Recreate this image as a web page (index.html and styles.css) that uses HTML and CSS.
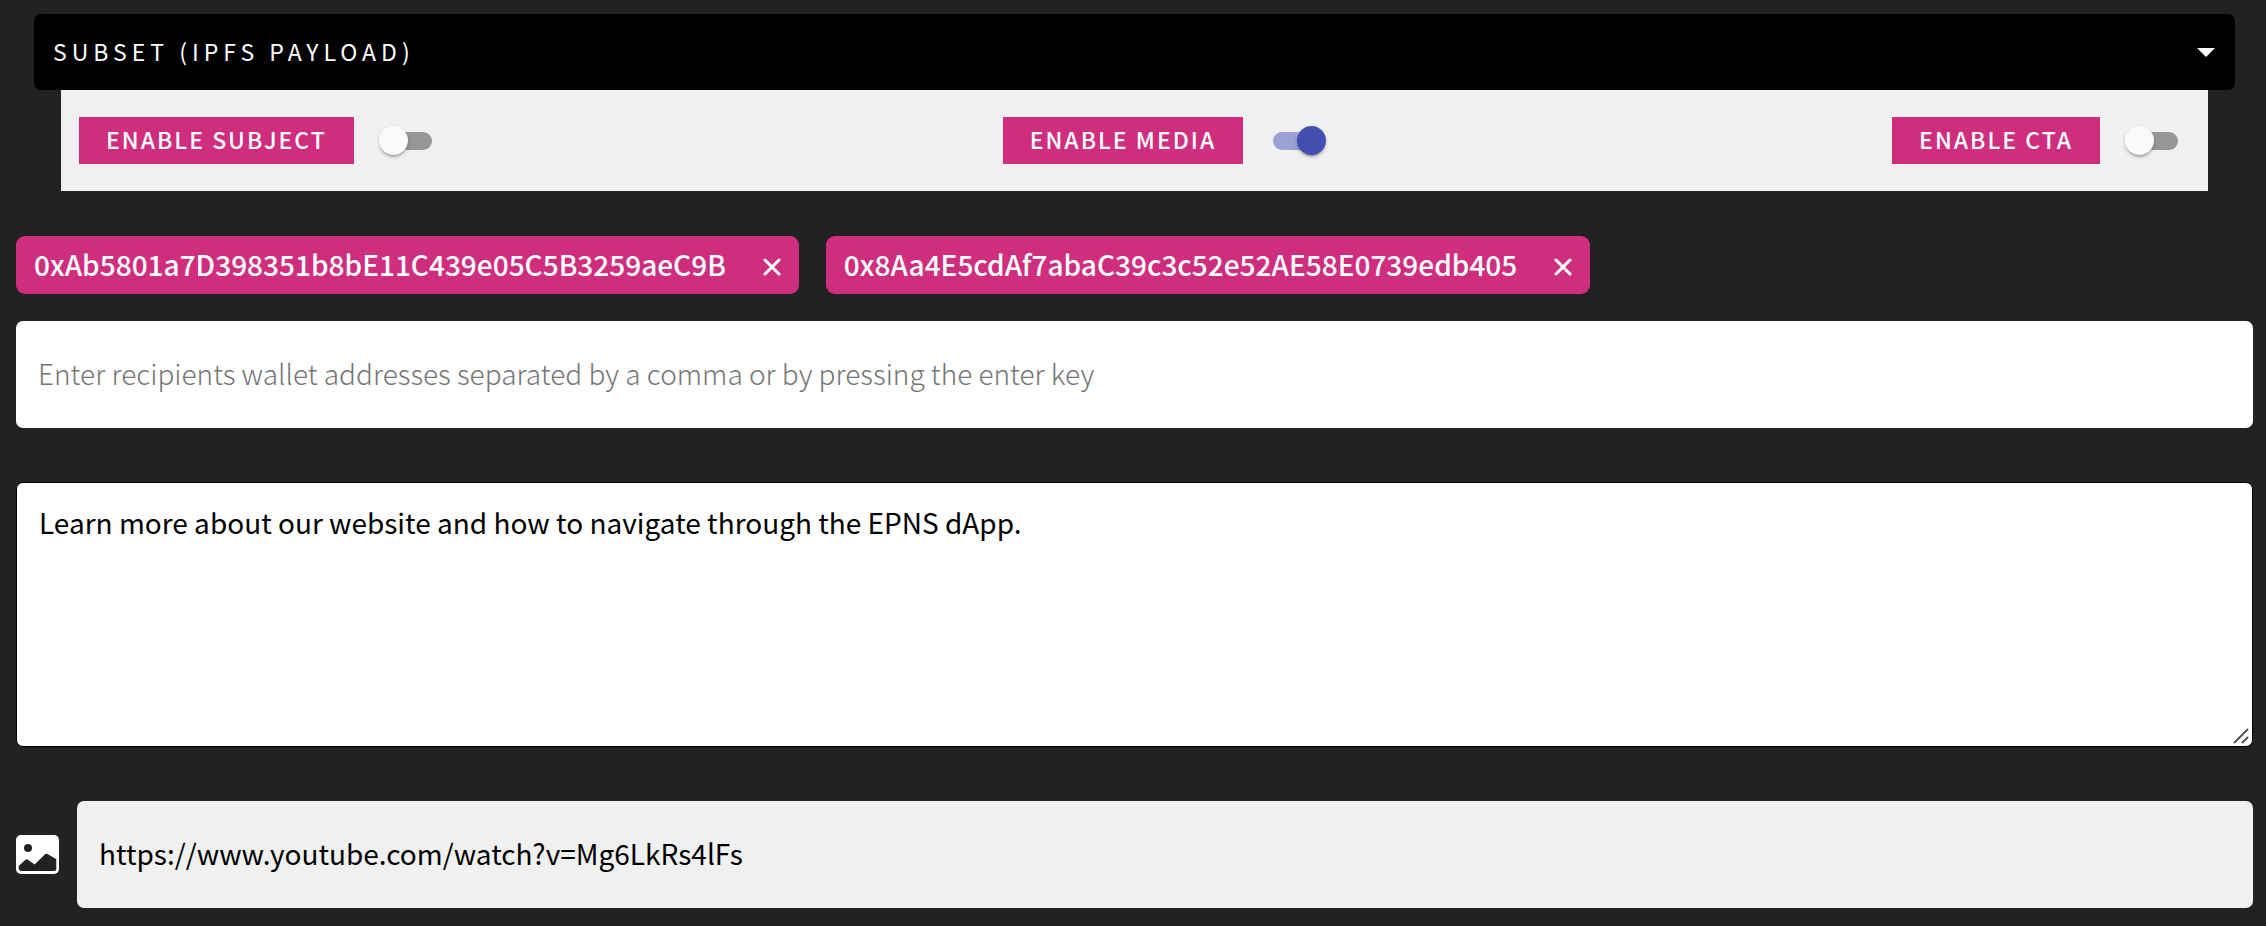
FILE: index.html
```html
<!DOCTYPE html>
<html lang="en">
<head>
<meta charset="utf-8">
<title>Send notification</title>
<link rel="stylesheet" href="styles.css">
</head>
<body>
<form class="composer">
  <div class="type">
    <div class="type-picker">
      <select class="type-select" aria-label="Notification type">
        <option>SUBSET (IPFS PAYLOAD)</option>
      </select>
      <svg class="type-caret" viewBox="0 0 18 9" aria-hidden="true"><path d="M0 0h18L9 9z"/></svg>
    </div>
    <div class="options">
      <div class="option">
        <label class="option-label" for="subject">ENABLE SUBJECT</label>
        <input class="switch" type="checkbox" role="switch" id="subject">
      </div>
      <div class="option">
        <label class="option-label" for="media">ENABLE MEDIA</label>
        <input class="switch" type="checkbox" role="switch" id="media" checked>
      </div>
      <div class="option">
        <label class="option-label" for="cta">ENABLE CTA</label>
        <input class="switch" type="checkbox" role="switch" id="cta">
      </div>
    </div>
  </div>

  <div class="recipients">
    <div class="chips">
      <div class="chip">
        <span class="chip-text">0xAb5801a7D398351b8bE11C439e05C5B3259aeC9B</span>
        <button class="chip-remove" type="button" aria-label="Remove recipient">
          <svg viewBox="0 0 18 18" aria-hidden="true"><path d="M2 2l14 14M16 2L2 16"/></svg>
        </button>
      </div>
      <div class="chip">
        <span class="chip-text">0x8Aa4E5cdAf7abaC39c3c52e52AE58E0739edb405</span>
        <button class="chip-remove" type="button" aria-label="Remove recipient">
          <svg viewBox="0 0 18 18" aria-hidden="true"><path d="M2 2l14 14M16 2L2 16"/></svg>
        </button>
      </div>
    </div>
    <input class="field field-light" type="text" aria-label="Recipients" placeholder="Enter recipients wallet addresses separated by a comma or by pressing the enter key">
  </div>

  <div class="message-box">
    <textarea class="message" aria-label="Message">Learn more about our website and how to navigate through the EPNS dApp.</textarea>
    <svg class="message-grip" viewBox="0 0 16 16" aria-hidden="true"><path d="M1 15L15 1M9 15l6-6"/></svg>
  </div>

  <div class="media">
    <svg class="media-icon" viewBox="0 0 43 40" aria-hidden="true">
      <rect width="43" height="39" rx="5" fill="#fff"/>
      <circle cx="12" cy="13" r="4" fill="#222"/>
      <path d="M2.700 31l6.500-6q1.500-1.500 3 0l6.500 4.500 10-10q1.300-1.300 2.800-.4l8.800 5.200v9.200q0 2.500-2.500 2.500H5.700q-3 0-3-3z" fill="#222"/>
    </svg>
    <input class="field field-grey" type="text" aria-label="Media URL" value="https://www.youtube.com/watch?v=Mg6LkRs4lFs">
  </div>
</form>
</body>
</html>
```

FILE: styles.css
```css
* {
  box-sizing: border-box;
}

body {
  margin: 0;
  background: #222;
  font-family: "Noto Sans CJK SC", "Noto Sans", sans-serif;
  font-size: 28px;
  line-height: 36px;
}

button,
input,
select,
textarea {
  margin: 0;
  border: 0;
  font: inherit;
}

.composer {
  display: flex;
  flex-direction: column;
  gap: 54px;
  padding: 14px 13px 18px 16px;
}

.type {
  margin: 0 18px -9px;
}

.type-picker {
  display: grid;
  align-items: center;
}

.type-select,
.type-caret {
  grid-area: 1 / 1;
}

.type-select {
  width: 100%;
  height: 76px;
  padding: 0 60px 2px 19px;
  appearance: none;
  border-radius: 7px;
  background: #000;
  color: #fff;
  font-size: 23px;
  letter-spacing: 5px;
}

.type-caret {
  justify-self: end;
  width: 18px;
  height: 9px;
  margin-right: 20px;
  fill: #fff;
  pointer-events: none;
}

.options {
  display: flex;
  justify-content: space-between;
  margin: 0 27px;
  padding: 27px 18px;
  background: #f0f0f0;
}

.option {
  display: flex;
  align-items: center;
  gap: 18px;
}

.option-label {
  padding: 4px 27px 7px;
  background: #cf2d7e;
  color: #fff;
  font-size: 23px;
  font-weight: 500;
  letter-spacing: 2px;
}

.switch {
  display: grid;
  align-items: center;
  width: 72px;
  height: 43px;
  padding: 0 7px;
  appearance: none;
}

.switch::before,
.switch::after {
  content: "";
  grid-area: 1 / 1;
}

.switch::before {
  height: 18px;
  margin: 0 5px;
  border-radius: 9px;
  background: #969696;
}

.switch::after {
  width: 29px;
  height: 29px;
  border-radius: 50%;
  background: #fafafa;
  box-shadow: 0 3px 2px -2px rgba(0, 0, 0, .2), 0 2px 2px rgba(0, 0, 0, .14), 0 2px 5px rgba(0, 0, 0, .12);
}

.switch:checked::before {
  background: #9ba2d2;
}

.switch:checked::after {
  justify-self: end;
  background: #434fb0;
}

.recipients {
  display: flex;
  flex-direction: column;
  gap: 27px;
}

.chips {
  display: flex;
  flex-wrap: wrap;
  gap: 27px;
}

.chip {
  display: flex;
  align-items: center;
  gap: 37px;
  height: 58px;
  padding: 0 18px;
  border-radius: 9px;
  background: #cf2d7e;
  color: #fff;
  font-weight: 500;
}

.chip-text {
  padding-bottom: 3px;
}

.chip-remove {
  display: flex;
  padding: 3px 0 0;
  background: none;
}

.chip-remove svg {
  width: 18px;
  height: 18px;
  fill: none;
  stroke: #fff;
  stroke-width: 3;
  stroke-linecap: round;
}

.field {
  width: 100%;
  height: 107px;
  padding: 0 22px 4px;
  border-radius: 7px;
  color: #000;
}

.field-light {
  background: #fff;
}

.field-light::placeholder {
  color: #757575;
  font-weight: 300;
}

.field-grey {
  background: #f0f0f0;
}

.message-box {
  position: relative;
}

.message {
  display: block;
  width: 100%;
  height: 265px;
  padding: 21px 22px;
  border: 1px solid #000;
  border-radius: 7px;
  background: #fff;
  color: #000;
  resize: vertical;
}

.message::-webkit-resizer {
  background: transparent;
}

.message-grip {
  position: absolute;
  right: 4px;
  bottom: 3px;
  width: 16px;
  height: 16px;
  fill: none;
  stroke: #555;
  stroke-width: 2;
  pointer-events: none;
}

.media {
  display: flex;
  align-items: center;
  gap: 18px;
}

.media-icon {
  flex: none;
  width: 43px;
  height: 40px;
}
```
